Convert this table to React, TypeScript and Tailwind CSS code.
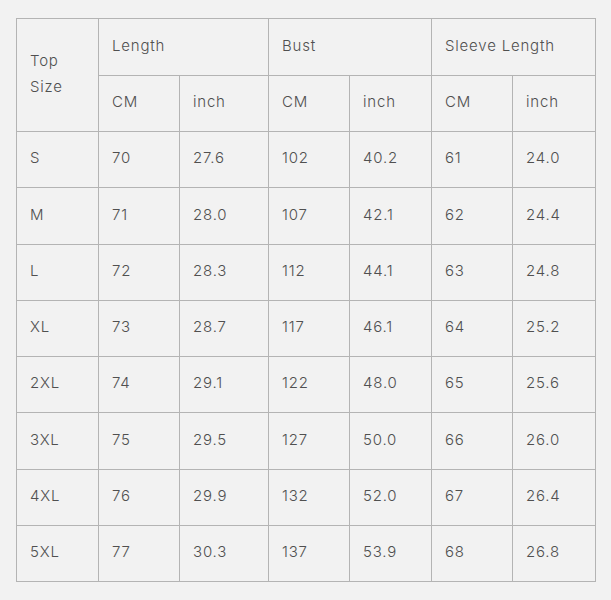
import React from "react";

const rows: [string, string, string, string, string, string, string][] = [
  ["S", "70", "27.6", "102", "40.2", "61", "24.0"],
  ["M", "71", "28.0", "107", "42.1", "62", "24.4"],
  ["L", "72", "28.3", "112", "44.1", "63", "24.8"],
  ["XL", "73", "28.7", "117", "46.1", "64", "25.2"],
  ["2XL", "74", "29.1", "122", "48.0", "65", "25.6"],
  ["3XL", "75", "29.5", "127", "50.0", "66", "26.0"],
  ["4XL", "76", "29.9", "132", "52.0", "67", "26.4"],
  ["5XL", "77", "30.3", "137", "53.9", "68", "26.8"],
];

const cell = "border border-[#b4b4b4] pl-[13px] pb-[2px] text-left align-middle font-light";

export default function App() {
  return (
    <div
      className="w-[611px] h-[600px] bg-[#f2f2f2] pt-[18px] pl-[16px]"
      style={{ fontFamily: '"Inter", "Noto Sans", sans-serif' }}
    >
      <table className="border-collapse table-fixed w-[579px] text-[15px] text-[#505050] tracking-[0.8px]">
        <colgroup>
          <col className="w-[82px]" />
          <col className="w-[81px]" />
          <col className="w-[89px]" />
          <col className="w-[81px]" />
          <col className="w-[82px]" />
          <col className="w-[81px]" />
          <col className="w-[83px]" />
        </colgroup>
        <thead>
          <tr className="h-[57px]">
            <th rowSpan={2} className={`${cell} leading-[26px]`}>
              Top
              <br />
              Size
            </th>
            <th colSpan={2} className={cell}>Length</th>
            <th colSpan={2} className={cell}>Bust</th>
            <th colSpan={2} className={cell}>Sleeve Length</th>
          </tr>
          <tr className="h-[56px]">
            <th className={cell}>CM</th>
            <th className={cell}>inch</th>
            <th className={cell}>CM</th>
            <th className={cell}>inch</th>
            <th className={cell}>CM</th>
            <th className={cell}>inch</th>
          </tr>
        </thead>
        <tbody>
          {rows.map((r) => (
            <tr key={r[0]} className="h-[56.25px]">
              {r.map((v, i) => (
                <td key={i} className={cell}>
                  {v}
                </td>
              ))}
            </tr>
          ))}
        </tbody>
      </table>
    </div>
  );
}
